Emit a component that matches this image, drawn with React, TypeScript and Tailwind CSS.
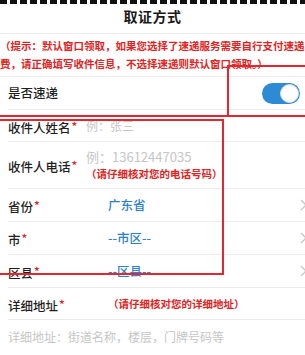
import React from 'react';

const font = { fontFamily: '"Noto Sans CJK SC", "Noto Sans", sans-serif' };

const Chevron = () => (
  <svg width="8" height="12" viewBox="0 0 8 12" className="shrink-0 -mr-[3px]">
    <polyline points="1,1 6,6 1,11" fill="none" stroke="#c8c8c8" strokeWidth="1.4" />
  </svg>
);

const Label = ({ text, required = true }: { text: string; required?: boolean }) => (
  <span className="text-[12.5px] font-medium text-[#1f1f1f] whitespace-nowrap">
    {text}
    {required && <span className="relative -top-[2px] text-[#e02020] text-[12px] ml-[1px]">*</span>}
  </span>
);

const PickerRow = ({ label, value }: { label: string; value: string }) => (
  <div className="h-[33px] ml-2 flex items-center border-b border-[#ececec]">
    <div className="w-[100px]">
      <Label text={label} />
    </div>
    <span className="text-[12.5px] font-medium text-[#2d7fd3] flex-1">{value}</span>
    <Chevron />
  </div>
);

export default function App() {
  return (
    <div className="relative w-[305px] h-[355px] overflow-hidden bg-white" style={font}>
      {/* top strip */}
      <div className="h-[4px] flex gap-[3px] overflow-hidden">
        {Array.from({ length: 32 }).map((_, i) => (
          <div key={i} className="w-[7px] h-[4px] shrink-0 bg-[#111]" />
        ))}
      </div>

      {/* header */}
      <div className="h-[30px] pb-[4px] flex items-center justify-center border-b border-[#ededed]">
        <h1 className="text-[14px] font-bold text-[#1a1a1a] tracking-[0.5px]">取证方式</h1>
      </div>

      {/* hint */}
      <div className="pt-[3px] pb-[3px] border-b border-[#ededed] text-[10.5px] leading-[18px] font-semibold text-[#e02424] whitespace-nowrap">
        <div>（提示：默认窗口领取，如果您选择了速递服务需要自行支付速递</div>
        <div>费，请正确填写收件信息，不选择速递则默认窗口领取。）</div>
      </div>

      {/* express switch */}
      <div className="h-[33px] ml-2 pr-[5px] flex items-center justify-between border-b border-[#ececec]">
        <Label text="是否速递" required={false} />
        <div className="w-[38px] h-[21px] rounded-full bg-[#2d8bd6] flex items-center justify-end p-[1px]">
          <div className="w-[19px] h-[19px] rounded-full bg-white border border-[#dcdcdc]" />
        </div>
      </div>

      {/* name */}
      <div className="h-[32px] ml-2 flex items-center border-b border-[#ececec]">
        <div className="w-[78px]">
          <Label text="收件人姓名" />
        </div>
        <span className="text-[12px] text-[#c6c6c6]">例：张三</span>
      </div>

      {/* phone */}
      <div className="h-[47px] ml-2 flex items-center border-b border-[#ececec]">
        <div className="w-[78px]">
          <Label text="收件人电话" />
        </div>
        <div className="flex flex-col leading-[17px]">
          <span className="text-[13px] text-[#c6c6c6]">例：13612447035</span>
          <span className="text-[10.5px] font-semibold text-[#e02424]">（请仔细核对您的电话号码）</span>
        </div>
      </div>

      <PickerRow label="省份" value="广东省" />
      <PickerRow label="市" value="--市区--" />
      <PickerRow label="区县" value="--区县--" />

      {/* detail address */}
      <div className="h-[32px] ml-2 flex items-center border-b border-[#ececec]">
        <div className="w-[100px]">
          <Label text="详细地址" />
        </div>
        <span className="text-[10.5px] font-semibold text-[#e02424]">（请仔细核对您的详细地址）</span>
      </div>
      <div className="h-[34px] ml-2 flex items-center">
        <span className="text-[12px] text-[#c6c6c6]">详细地址：街道名称，楼层，门牌号码等</span>
      </div>

      {/* annotation boxes */}
      <div className="absolute left-[227px] top-[65px] w-[84px] h-[52px] border-2 border-[#e5262e]" />
      <div className="absolute left-0 top-[115px] w-[229px] h-[2px] bg-[#e5262e]" />
      <div className="absolute left-[-4px] top-[119px] w-[228px] h-[156px] border-2 border-[#e5262e]" />
    </div>
  );
}
